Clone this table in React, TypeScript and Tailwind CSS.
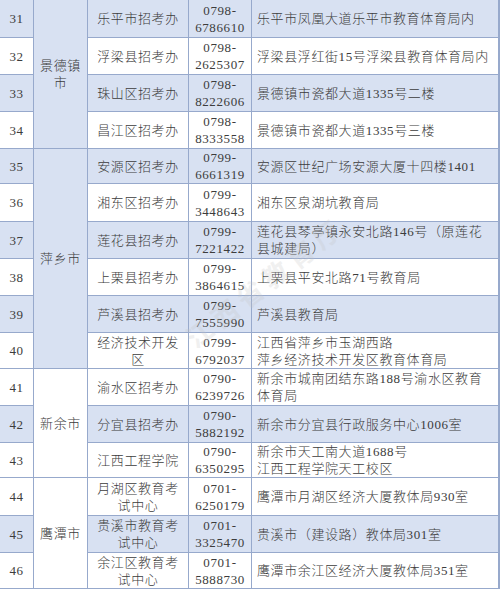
import React from "react";

type Row = { n: number; office: string; phone: string; addr: React.ReactNode; blue: boolean };

const rows: Row[] = [
  { n: 31, office: "乐平市招考办", phone: "6786610", addr: "乐平市凤凰大道乐平市教育体育局内", blue: true },
  { n: 32, office: "浮梁县招考办", phone: "2625307", addr: "浮梁县浮红街15号浮梁县教育体育局内", blue: false },
  { n: 33, office: "珠山区招考办", phone: "8222606", addr: "景德镇市瓷都大道1335号二楼", blue: true },
  { n: 34, office: "昌江区招考办", phone: "8333558", addr: "景德镇市瓷都大道1335号三楼", blue: false },
  { n: 35, office: "安源区招考办", phone: "6661319", addr: "安源区世纪广场安源大厦十四楼1401", blue: true },
  { n: 36, office: "湘东区招考办", phone: "3448643", addr: "湘东区泉湖坑教育局", blue: false },
  { n: 37, office: "莲花县招考办", phone: "7221422", addr: "莲花县琴亭镇永安北路146号（原莲花县城建局）", blue: true },
  { n: 38, office: "上栗县招考办", phone: "3864615", addr: "上栗县平安北路71号教育局", blue: false },
  { n: 39, office: "芦溪县招考办", phone: "7555990", addr: "芦溪县教育局", blue: true },
  {
    n: 40,
    office: "经济技术开发区",
    phone: "6792037",
    addr: (
      <>
        江西省萍乡市玉湖西路
        <br />
        萍乡经济技术开发区教育体育局
      </>
    ),
    blue: false,
  },
  { n: 41, office: "渝水区招考办", phone: "6239726", addr: "新余市城南团结东路188号渝水区教育体育局", blue: false },
  { n: 42, office: "分宜县招考办", phone: "5882192", addr: "新余市分宜县行政服务中心1006室", blue: true },
  {
    n: 43,
    office: "江西工程学院",
    phone: "6350295",
    addr: (
      <>
        新余市天工南大道1688号
        <br />
        江西工程学院天工校区
      </>
    ),
    blue: false,
  },
  { n: 44, office: "月湖区教育考试中心", phone: "6250179", addr: "鹰潭市月湖区经济大厦教体局930室", blue: false },
  { n: 45, office: "贵溪市教育考试中心", phone: "3325470", addr: "贵溪市（建设路）教体局301室", blue: true },
  { n: 46, office: "余江区教育考试中心", phone: "5888730", addr: "鹰潭市余江区经济大厦教体局351室", blue: false },
];

const prefix = (n: number) => (n <= 34 ? "0798" : n <= 40 ? "0799" : n <= 43 ? "0790" : "0701");

const rowClasses = [
  "row-start-1",
  "row-start-2",
  "row-start-3",
  "row-start-4",
  "row-start-5",
  "row-start-6",
  "row-start-7",
  "row-start-8",
  "row-start-9",
  "row-start-10",
  "row-start-11",
  "row-start-12",
  "row-start-13",
  "row-start-14",
  "row-start-15",
  "row-start-16",
];

export default function App() {
  const cell = "flex items-center";
  return (
    <div
      className="relative w-[500px] h-[589px] overflow-hidden bg-white text-[13px] leading-[17px] tracking-[0.6px] text-[#3c3c3c] font-light"
      style={{ fontFamily: '"Liberation Serif", "Noto Sans CJK SC", serif' }}
    >
      <div className="grid grid-cols-[33px_53px_100px_62px_246px] grid-rows-[37px_36px_36px_36px_34px_37px_36px_36px_36px_35px_36px_36px_34px_37px_36px_35px] gap-px bg-[#97a9cc] pr-px pb-px w-[500px]">
        {rows.map((r, i) => {
          const bg = r.blue ? "bg-[#d8e1f2]" : "bg-white";
          const rs = rowClasses[i];
          return (
            <React.Fragment key={r.n}>
              <div className={`${cell} ${bg} ${rs} col-start-1 justify-center`}>
                <div>{r.n}</div>
              </div>
              <div className={`${cell} ${bg} ${rs} col-start-3 justify-center px-[6px]`}>
                <div className="text-center">{r.office}</div>
              </div>
              <div className={`${cell} ${bg} ${rs} col-start-4 justify-center`}>
                <div className="text-center">
                  <div>{prefix(r.n)}-</div>
                  <div>{r.phone}</div>
                </div>
              </div>
              <div className={`${cell} ${bg} ${rs} col-start-5 pl-[5px] pr-[8px]`}>
                <div>{r.addr}</div>
              </div>
            </React.Fragment>
          );
        })}
        <div className="col-start-2 row-start-1 row-span-4 flex items-center justify-center bg-[#d8e1f2] px-[6px]">
          <div className="text-center">景德镇市</div>
        </div>
        <div className="col-start-2 row-start-5 row-span-6 flex items-center justify-center bg-[#d8e1f2] px-[6px]">
          <div className="text-center">萍乡市</div>
        </div>
        <div className="col-start-2 row-start-11 row-span-3 flex items-center justify-center bg-white px-[6px]">
          <div className="text-center">新余市</div>
        </div>
        <div className="col-start-2 row-start-14 row-span-3 flex items-center justify-center bg-white px-[6px]">
          <div className="text-center">鹰潭市</div>
        </div>
      </div>
      <div className="pointer-events-none absolute left-[170px] top-[275px] -rotate-[38deg] text-[26px] font-bold tracking-[6px] text-[#c4c4c4] opacity-25 whitespace-nowrap">
        江西省教育厅
      </div>
    </div>
  );
}
